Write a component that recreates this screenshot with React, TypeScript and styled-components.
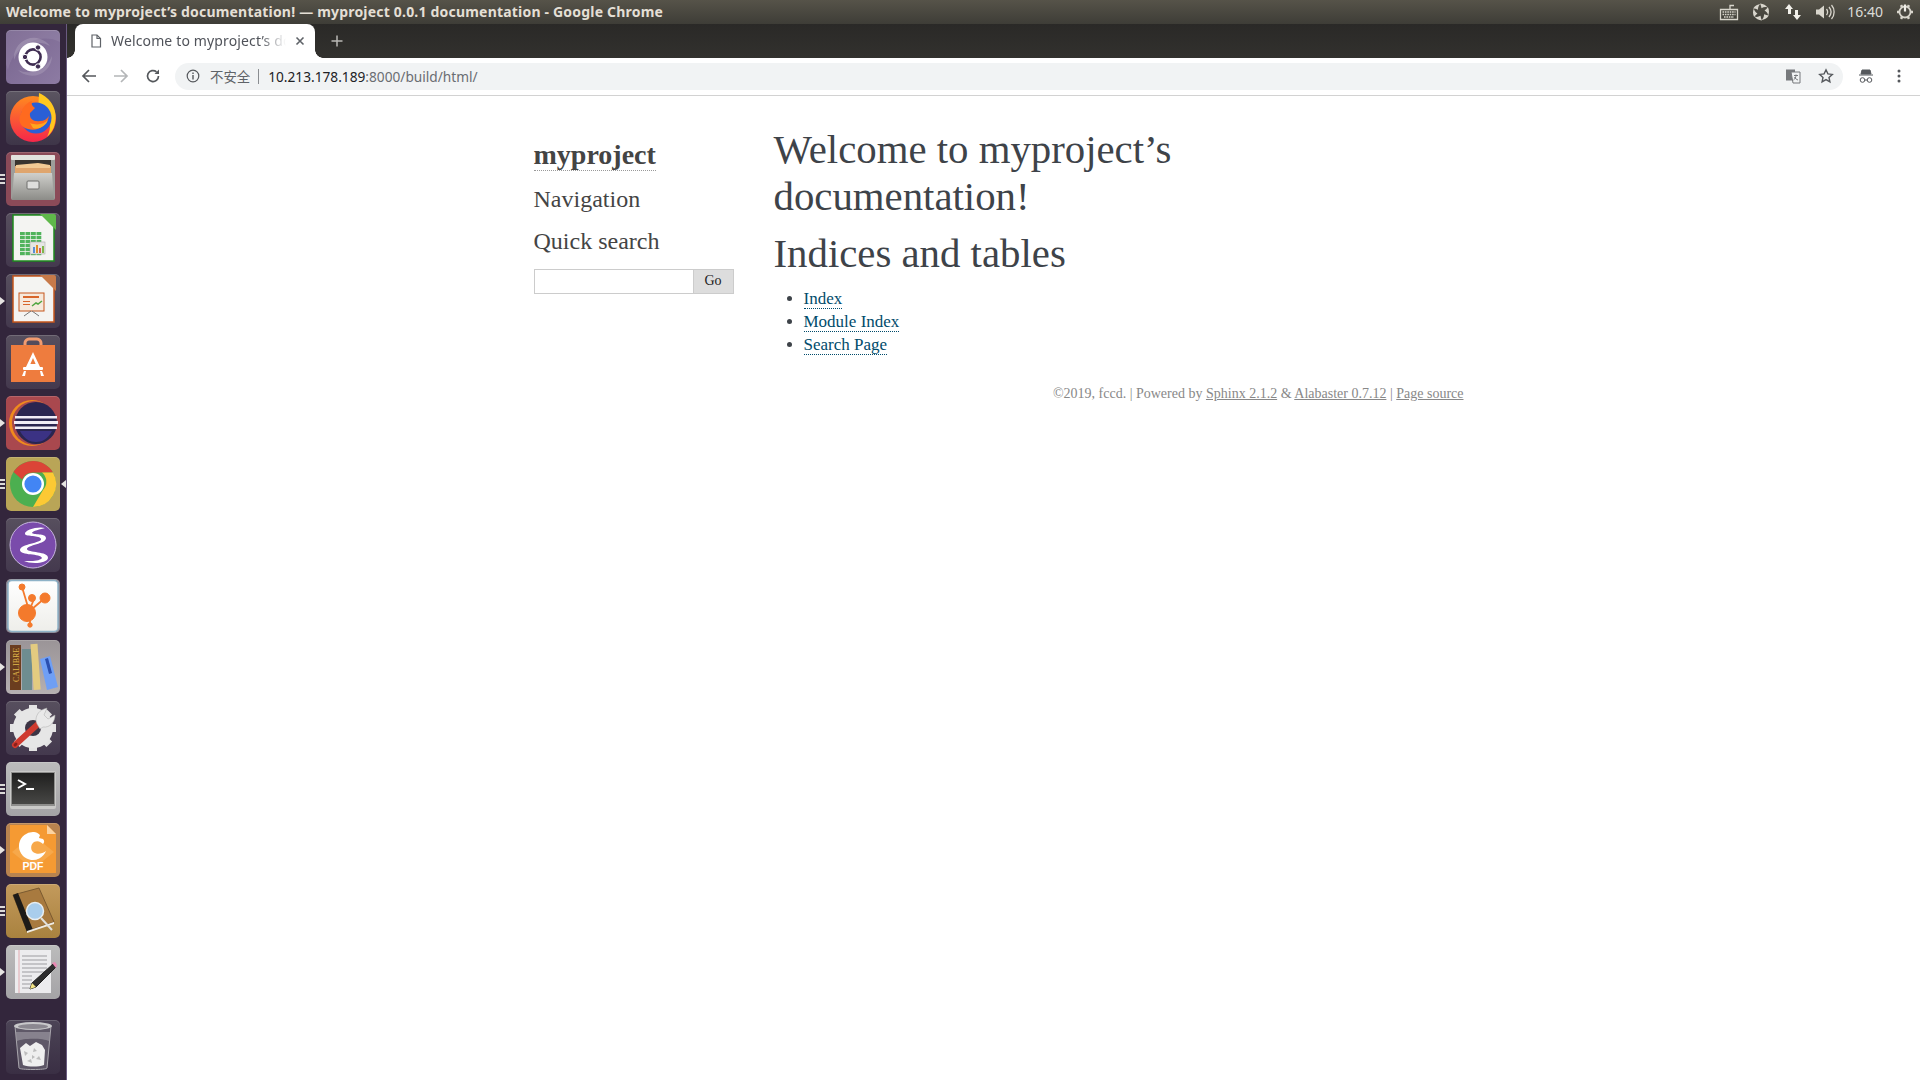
import React from "react";
import styled, { createGlobalStyle } from "styled-components";

const Global = createGlobalStyle`
  html, body { margin: 0; padding: 0; height: 100%; overflow: hidden; background: #fff; }
  #root { height: 100%; }
`;

const Screen = styled.div`
  display: flex; flex-direction: column; height: 1080px; width: 1920px; overflow: hidden;
`;
const TopBar = styled.header`
  height: 24px; flex: none; display: flex; align-items: center; justify-content: space-between;
  padding: 0 6px 0 6px;
  background: linear-gradient(#565349, #3e3d37);
  color: #e4dfd5;
`;
const WindowTitle = styled.div`
  font: 700 14px/24px "Noto Sans", sans-serif; letter-spacing: 0.014em; white-space: nowrap;
`;
const Tray = styled.div`
  display: flex; align-items: center; gap: 12px; color: #d8d5cc;
`;
const Clock = styled.span`
  font: 400 14px/24px "Noto Sans", sans-serif; color: #dcdcd8; margin: 0 1px 0 0;
`;
const Body = styled.div`
  flex: 1; display: flex; min-height: 0;
`;
const Launcher = styled.nav`
  position: relative; width: 67px; flex: none; box-sizing: border-box;
  display: flex; flex-direction: column; gap: 7px; padding: 6px 0 6px 6px;
  background: #33263c; border-right: 1px solid #6a5b80;
`;
const Tile = styled.div<{ $bg: string; $end?: boolean }>`
  position: relative; width: 54px; height: 54px; flex: none; border-radius: 5px;
  background: ${(p) => p.$bg};
  box-shadow: inset 0 1px 0 rgba(255,255,255,.16);
  margin-top: ${(p) => (p.$end ? "auto" : "0")};
  svg { position: absolute; inset: 0; display: block; }
`;
const Pips = styled.i`
  position: absolute; left: -6px; top: 50%; transform: translateY(-50%);
  width: 5px; display: flex; flex-direction: column; gap: 2px;
  span { display: block; height: 2px; background: #dcdad8; }
`;
const ArrowPip = styled.i`
  position: absolute; left: -6px; top: 50%; transform: translateY(-50%);
  border-left: 5px solid #e6e4e2; border-top: 4px solid transparent; border-bottom: 4px solid transparent;
`;
const ActivePip = styled.i`
  position: absolute; right: -6px; top: 50%; transform: translateY(-50%);
  border-right: 5px solid #e6e4e2; border-top: 4px solid transparent; border-bottom: 4px solid transparent;
`;
const Browser = styled.main`
  flex: 1; min-width: 0; display: flex; flex-direction: column;
`;
const TabStrip = styled.div`
  height: 34px; flex: none; display: flex; align-items: stretch;
  padding-left: 8px; background: linear-gradient(#2a2927, #32312e);
  box-sizing: border-box;
`;
const Tab = styled.div`
  position: relative; width: 240px; box-sizing: border-box; display: flex; align-items: center;
  padding: 0 9px 0 14px; gap: 8px; background: #fff; border-radius: 8px 8px 0 0;
  &::before, &::after {
    content: ""; position: absolute; bottom: 0; width: 8px; height: 8px;
  }
  &::before { left: -8px; background: radial-gradient(circle at 0 0, transparent 7.500px, #fff 8px); }
  &::after { right: -8px; background: radial-gradient(circle at 100% 0, transparent 7.500px, #fff 8px); }
`;
const TabTitle = styled.span`
  flex: 1; min-width: 0; overflow: hidden; white-space: nowrap;
  font: 400 14px/34px "Noto Sans", sans-serif; color: #50535a; letter-spacing: .01em;
  mask-image: linear-gradient(90deg, #000 85%, transparent 100%);
`;
const NewTab = styled.div`
  width: 44px; display: flex; align-items: center; justify-content: center; color: #b9b8b5;
`;
const Toolbar = styled.div`
  height: 38px; flex: none; box-sizing: border-box; display: flex; align-items: center;
  background: #fff; border-bottom: 1px solid #d2d2d2; padding: 0 0 1px 6px;
`;
const NavButton = styled.button`
  width: 32px; height: 28px; padding: 0; margin: 0; border: 0; background: none;
  display: flex; align-items: center; justify-content: center;
`;
const Omnibox = styled.div`
  flex: 1; height: 27px; margin-left: 6px; border-radius: 14px; background: #f1f3f4;
  display: flex; align-items: center; padding: 0 9px 0 11px; min-width: 0;
`;
const Insecure = styled.span`
  font: 400 13.400px/27px "Noto Sans CJK SC", sans-serif; color: #5f6368; margin-left: 10px;
`;
const Divider = styled.span`
  width: 1px; height: 15px; background: #8a8d91; margin: 0 9px 0 8px;
`;
const Url = styled.span`
  flex: 1; font: 400 13.700px/27px "Noto Sans", sans-serif; color: #6a6d72;
  b { font-weight: 400; color: #202124; }
`;
const OmniIcon = styled.span<{ $gap: number }>`
  display: flex; width: 16px; height: 16px; position: relative; margin-left: ${(p) => p.$gap}px;
`;
const ToolIcons = styled.div`
  width: 77px; flex: none; display: flex; align-items: center; justify-content: space-between;
  padding: 0 19px 0 15px; box-sizing: border-box;
`;
const Page = styled.div`
  flex: 1; background: #fff; color: #3e4349; font: 17px/23px "Liberation Serif", serif;
  padding-top: 30px; overflow: hidden;
`;
const Doc = styled.div`
  width: 940px; margin: 0 auto; display: flex;
`;
const Sidebar = styled.aside`
  width: 220px; flex: none; box-sizing: border-box; padding: 11px 10px 0;
`;
const Logo = styled.h1`
  margin: 0 0 8px; font: 700 28px/36px "Liberation Serif", serif; color: #444;
  span { border-bottom: 1px dotted #999; }
`;
const SideHead = styled.h3`
  margin: 0 0 5.500px; font: 400 24px/36px "Liberation Serif", serif; color: #444;
`;
const SearchForm = styled.form`
  display: flex; height: 25px; margin-top: 10px; width: 200px;
`;
const SearchInput = styled.input`
  flex: 1; min-width: 0; box-sizing: border-box; border: 1px solid #ccc; border-right: 0; background: #fff; padding: 0; margin: 0;
`;
const SearchButton = styled.button`
  width: 41px; box-sizing: border-box; border: 1px solid #ccc; background: #ddd; padding: 0; margin: 0;
  font: 14px "Liberation Serif", serif; color: #222;
`;
const Content = styled.article`
  flex: 1; padding: 0 30px;
`;
const H1 = styled.h1`
  margin: 0 0 11px; font: 400 40.8px/47px "Liberation Serif", serif; color: #3e4349;
`;
const H2 = styled.h2`
  margin: 0 0 10px; font: 400 40.8px/46px "Liberation Serif", serif; color: #3e4349;
`;
const List = styled.ul`
  margin: 0 0 0 30px; padding: 0;
`;
const DocLink = styled.a`
  color: #004b6b; text-decoration: none; border-bottom: 1px dotted #004b6b;
`;
const Footer = styled.footer`
  width: 940px; margin: 28px auto 0; text-align: right; font: 14px/20px "Liberation Serif", serif; color: #888;
  a { color: #888; text-decoration: underline; }
`;

const I = ({ s = 54, children, ...r }: any) => (
  <svg width={s} height={s} viewBox={`0 0 ${s} ${s}`} {...r}>{children}</svg>
);

const UbuntuIcon = () => (
  <I>
    <path d="M2 40C8 14 34 2 54 12V4a4 4 0 0 0-4-4H4a4 4 0 0 0-4 4v30z" fill="#fff" opacity=".08" />
    <path d="M8 30A20 20 0 0 1 44 16 25 25 0 0 0 8 30z" fill="#fff" opacity=".16" />
    <path d="M46 26A20 20 0 0 1 12 40 25 25 0 0 0 46 26z" fill="#fff" opacity=".14" />
    <circle cx="27" cy="27" r="14.500" fill="#fff" />
    <circle cx="27" cy="27" r="7.600" fill="none" stroke="#3f2d52" strokeWidth="2.600" />
    <circle cx="32" cy="17.500" r="2.700" fill="#3f2d52" stroke="#fff" />
    <circle cx="19" cy="27" r="2.700" fill="#3f2d52" stroke="#fff" />
    <circle cx="32" cy="36.500" r="2.700" fill="#3f2d52" stroke="#fff" />
  </I>
);
const FirefoxIcon = () => (
  <I>
    <defs>
      <linearGradient id="ffo" x1="0" y1="0" x2="0" y2="1">
        <stop offset="0" stopColor="#ff8a1f" />
        <stop offset="1" stopColor="#f5264a" />
      </linearGradient>
    </defs>
    <circle cx="27" cy="28" r="23" fill="url(#ffo)" />
    <path d="M33 2c12 5 19 17 16 30-1 6-4 10-8 14 6-11 3-22-9-25z" fill="#ffc81f" />
    <circle cx="30" cy="27" r="15.500" fill="#2a5fd6" />
    <path d="M15 22c2-7 7-11 11-12-1 3 0 5 3 7l-5 5c-1 6 4 9 10 8 4 0 7-2 9-5-2 10-12 16-21 13C13 36 12 28 15 22z" fill="#ff6a1f" />
    <path d="M24 32c7 3 14 1 18-3-2 6-9 10-15 8z" fill="#ffa51f" />
  </I>
);
const FilesIcon = () => (
  <I>
    <defs>
      <linearGradient id="fc" x1="0" y1="0" x2="0" y2="1">
        <stop offset="0" stopColor="#cfcfcb" />
        <stop offset="1" stopColor="#8c8c88" />
      </linearGradient>
    </defs>
    <rect x="5" y="3" width="44" height="45" rx="2" fill="#9d9d9a" />
    <rect x="5" y="3" width="44" height="5" rx="1" fill="#e2e2de" />
    <rect x="9" y="8" width="36" height="14" fill="#38342f" />
    <path d="M9 14h36v9H9z" fill="#dfa56d" />
    <path d="M10 13l22-2 12 2v3H10z" fill="#f2ca94" />
    <path d="M8 21h38l2 27H6z" fill="url(#fc)" />
    <rect x="21" y="29" width="12" height="8" rx="1" fill="#dededc" stroke="#6f6f6c" />
  </I>
);
const CalcIcon = () => (
  <I>
    <path d="M7 2h33l8 8v38H7z" fill="#f4f4f2" stroke="#1e8a1e" strokeWidth="1.500" />
    <path d="M34 1h14a2 2 0 0 1 2 2v14z" fill="#5fb84a" />
    <g fill="#50b35c">
      {[0, 1, 2, 3, 4, 5].map((r) =>
        [0, 1, 2, 3].map((c) => <rect key={`${r}${c}`} x={14 + c * 5.500} y={19 + r * 4} width="4.800" height="3.200" />)
      )}
    </g>
    <rect x="24" y="29" width="15" height="12" fill="#e6e6e4" stroke="#aaa" strokeWidth=".6" />
    <path d="M27 40v-6h2v6z" fill="#5b8ed6" />
    <path d="M30 40v-8h2v8z" fill="#e2902a" />
    <path d="M33 40v-5h2v5z" fill="#d65b5b" />
    <path d="M36 40v-7h2v7z" fill="#7fb74a" />
  </I>
);
const ImpressIcon = () => (
  <I>
    <path d="M7 2h33l8 8v38H7z" fill="#f4f4f2" stroke="#c5561c" strokeWidth="1.500" />
    <path d="M34 1h14a2 2 0 0 1 2 2v14z" fill="#c77a4a" />
    <rect x="13" y="19" width="25" height="18" fill="#f6e9dc" stroke="#c5561c" />
    <path d="M17 22h16v2H17zM17 27h7v1H17zM17 30h7v1H17z" fill="#d8662b" />
    <path d="M26 32l4-3 2 1 4-3" stroke="#52a642" strokeWidth="1.500" fill="none" />
    <path d="M25 37l-7 5M26 37l7 5" stroke="#777" />
  </I>
);
const SoftwareIcon = () => (
  <I>
    <path d="M19 13V8c0-2 2-4 4-4h8c2 0 4 2 4 4v5" fill="none" stroke="#f19b70" strokeWidth="3" />
    <path d="M5 10h44v37H5z" fill="#ee7c3e" />
    <path d="M27 17l7 15H20z" fill="#fff" />
    <path d="M27 23l2.600 6h-5.200z" fill="#ee7c3e" />
    <rect x="17" y="32" width="20" height="3" rx="1" fill="#fff" />
    <path d="M20 36h-2l-2 5h3zM34 36h2l2 5h-3z" fill="#fff" />
  </I>
);
const EclipseIcon = () => (
  <I>
    <circle cx="26" cy="27" r="23" fill="#f08a1d" />
    <circle cx="28" cy="27" r="22" fill="#a6484e" />
    <circle cx="30" cy="27" r="21" fill="#2a2550" />
    <path d="M9 20h42v2.500H9zM8 25h44v3H8zM9 30.500h42V33H9z" fill="#f0ecf6" />
    <path d="M14 35h32c-4 8-10 11-16 11s-12-3-16-11z" fill="#3b3284" />
  </I>
);
const ChromeIcon = () => (
  <I>
    <circle cx="27" cy="27" r="23" fill="#4caf50" />
    <path d="M7.500 15A23 23 0 0 1 47 15.500H27a12 12 0 0 0-11 7z" fill="#db4437" />
    <path d="M47 15.500A23 23 0 0 1 27 50l10-17a12 12 0 0 0-1-17.500z" fill="#fcc934" />
    <circle cx="27" cy="27" r="11" fill="#fff" />
    <circle cx="27" cy="27" r="8.600" fill="#4285f4" />
  </I>
);
const EmacsIcon = () => (
  <I>
    <circle cx="27" cy="27" r="23" fill="#7a4bab" stroke="#c7b4df" strokeWidth="1" />
    <path d="M39 10c-7-2-21 2-20 6 1 3 15 1 16 5 1 4-21 5-21 11 0 6 21 3 22 8-3 4-15 3-18 3 6 3 23 3 24-3 1-7-21-5-21-9 0-4 19-5 19-11 0-5-13-3-14-5 0-2 9-4 13-5z" fill="#fff" />
  </I>
);
const XmindIcon = () => (
  <I>
    <defs>
      <linearGradient id="xm" x1="0" y1="0" x2="0" y2="1">
        <stop offset="0" stopColor="#fff" />
        <stop offset="1" stopColor="#eeeeea" />
      </linearGradient>
    </defs>
    <rect x="2" y="1.500" width="50" height="51" rx="4" fill="url(#xm)" stroke="#8fb3c8" strokeWidth="1.500" />
    <g fill="#f47a2c" stroke="#f47a2c">
      <path d="M16 8l6 20M24 30l4-10M26 30L39 19M24 40v6" strokeWidth="1.800" fill="none" />
      <circle cx="16" cy="8" r="3" />
      <circle cx="26" cy="19" r="3.500" />
      <circle cx="39" cy="19" r="5" />
      <circle cx="21" cy="34" r="8.500" />
      <circle cx="24" cy="46" r="2.200" />
    </g>
  </I>
);
const CalibreIcon = () => (
  <I>
    <rect x="4" y="5" width="11" height="45" fill="#6b3d1f" />
    <text transform="translate(12.500 42) rotate(-90)" fontFamily="Liberation Serif, serif" fontSize="8" fill="#e0b84a">CALIBRE</text>
    <rect x="16" y="9" width="10" height="41" fill="#6e8d90" />
    <rect x="26" y="4" width="7" height="46" fill="#e3cb80" transform="rotate(-4 28 26)" />
    <path d="M34 19l10-3 8 31-11 3z" fill="#6f9ff5" />
    <path d="M39 19l3-1 4 15-3 1z" fill="#2a4fb0" />
  </I>
);
const SettingsIcon = () => (
  <I>
    <g stroke="#e3e3e3" strokeWidth="8">
      {[0, 45, 90, 135].map((a) => <path key={a} d="M27 4v46" transform={`rotate(${a} 27 27)`} />)}
    </g>
    <circle cx="27" cy="27" r="14" fill="none" stroke="#e6e6e6" strokeWidth="12" />
    <circle cx="27" cy="27" r="8" fill="#3c3444" />
    <path d="M9 44l23-21" stroke="#cf3a2f" strokeWidth="6" strokeLinecap="round" />
    <path d="M9 44l1-1" stroke="#8a1f1a" strokeWidth="3" strokeLinecap="round" />
    <path d="M31 23c-3-6 1-13 7-15l3-1-3 7 4 4 7-4c0 7-5 13-12 12l-3 2z" fill="#e9e9e9" stroke="#aaa" strokeWidth=".5" />
  </I>
);
const TerminalIcon = () => (
  <I>
    <defs>
      <linearGradient id="tm" x1="0" y1="0" x2="0" y2="1">
        <stop offset="0" stopColor="#1f1f1e" />
        <stop offset="1" stopColor="#474745" />
      </linearGradient>
    </defs>
    <rect x="4" y="9" width="46" height="38" rx="2" fill="#c9c9c7" />
    <rect x="5" y="10" width="44" height="34" fill="#8e8e8c" />
    <rect x="6" y="11" width="42" height="31" fill="url(#tm)" />
    <path d="M12 18l7 4-7 4" fill="none" stroke="#fff" strokeWidth="2" />
    <path d="M20 27h8" stroke="#fff" strokeWidth="2" />
  </I>
);
const FoxitIcon = () => (
  <I>
    <path d="M4 2h37l9 9v39H4z" fill="#f59a33" />
    <path d="M27 12l21 17-21 17L6 29z" fill="#f7a84a" />
    <path d="M41 2l9 9h-9z" fill="#fbd3a2" />
    <path d="M28 9a14 14 0 1 0 12 19c-4 3-9 4-13 1-3-3-2-8 1-10 4-2 7 0 9 2 2-2 1-4 0-5l-4-1 1-3c-2-2-4-3-6-3z" fill="#fff" />
    <text x="27" y="47" textAnchor="middle" fontFamily="Liberation Sans, sans-serif" fontWeight="700" fontSize="10.500" fill="#fff">PDF</text>
  </I>
);
const BookIcon = () => (
  <I>
    <path d="M7 11L33 4l15 34-27 9z" fill="#a87a3f" stroke="#7a5a30" />
    <path d="M7 11L12 9l15 37-6 2z" fill="#1d1b18" />
    <path d="M21 47l27-9v2l-27 9z" fill="#f0ece4" />
    <circle cx="29" cy="27" r="8.500" fill="#a9cdec" stroke="#e8eef2" strokeWidth="1.500" />
    <path d="M35 34l11 12" stroke="#e0e0dc" strokeWidth="2" />
  </I>
);
const GeditIcon = () => (
  <I>
    <rect x="9" y="5" width="36" height="43" fill="#ececee" />
    <path d="M13 5v43" stroke="#e2aab0" />
    <g stroke="#9c9ca0" strokeWidth="1">
      {[11, 15, 19, 23, 27, 31, 35, 39, 43].map((y) => <path key={y} d={`M16 ${y}h${y > 27 ? 10 : 25}`} />)}
    </g>
    <path d="M47 19l3 3-20 20-6 2 2-6z" fill="#2d2d2e" stroke="#222" />
    <path d="M46 18l3-1 2 3-1 3z" fill="#e889b3" />
    <path d="M24 44l2-6 4 4z" fill="#f2e484" />
  </I>
);
const TrashIcon = () => (
  <I>
    <path d="M9 6l4 42c0 2 28 2 28 0l4-42z" fill="#6a6472" fillOpacity=".7" stroke="#a9a6ad" />
    <ellipse cx="27" cy="6" rx="19" ry="4" fill="#c8c8ca" />
    <ellipse cx="27" cy="6.500" rx="15" ry="2.500" fill="#8b8890" />
    <path d="M10 12h34l-1 9c-6-3-26-3-32 0z" fill="#fff" opacity=".25" />
    <g fill="#efefef">
      <path d="M14 28l6-5 4 3 6-4 6 3 3 5-1 15c-6 2-15 2-21 0z" />
    </g>
    <g fill="#bdbdbd">
      <path d="M18 31l4 2-3 3zM28 28l3 3-4 1zM33 36l2 4-5-1zM21 41l4-2 1 4zM26 35l3 2-3 2z" />
    </g>
  </I>
);

const dock: { Icon: React.FC; bg: string; mark?: "two" | "arrow" | "active" }[] = [
  { Icon: UbuntuIcon, bg: "linear-gradient(135deg,#77648e,#8d7ba3)" },
  { Icon: FirefoxIcon, bg: "linear-gradient(#5b5561,#3e3548)" },
  { Icon: FilesIcon, bg: "#8b4a58", mark: "two" },
  { Icon: CalcIcon, bg: "linear-gradient(#574f5e,#44394e)" },
  { Icon: ImpressIcon, bg: "linear-gradient(#574f5e,#44394e)", mark: "arrow" },
  { Icon: SoftwareIcon, bg: "linear-gradient(#574f5e,#44394e)" },
  { Icon: EclipseIcon, bg: "#a9484e", mark: "arrow" },
  { Icon: ChromeIcon, bg: "#b9a557", mark: "active" },
  { Icon: EmacsIcon, bg: "linear-gradient(#574f5e,#44394e)" },
  { Icon: XmindIcon, bg: "#8a8590" },
  { Icon: CalibreIcon, bg: "linear-gradient(#9a9497,#b5afb1)", mark: "arrow" },
  { Icon: SettingsIcon, bg: "linear-gradient(#574f5e,#44394e)" },
  { Icon: TerminalIcon, bg: "linear-gradient(#bcbcbc,#a4a3a6)", mark: "two" },
  { Icon: FoxitIcon, bg: "#b8834f", mark: "arrow" },
  { Icon: BookIcon, bg: "linear-gradient(#c39a5c,#a9823f)", mark: "two" },
  { Icon: GeditIcon, bg: "linear-gradient(#bcbcbc,#a4a3a6)", mark: "arrow" },
];

const Tick = ({ mark }: { mark?: string }) => {
  if (mark === "two") return <Pips><span /><span /><span /></Pips>;
  if (mark === "arrow") return <ArrowPip />;
  if (mark === "active") return <><Pips><span /><span /><span /></Pips><ActivePip /></>;
  return null;
};

const TraySvg = ({ w, children }: any) => (
  <svg width={w} height="20" viewBox={`0 0 ${w} 20`} fill="none" stroke="currentColor" strokeWidth="1.300">{children}</svg>
);

export default function App() {
  return (
    <Screen>
      <Global />
      <TopBar>
        <WindowTitle>Welcome to myproject’s documentation! — myproject 0.0.1 documentation - Google Chrome</WindowTitle>
        <Tray>
          <TraySvg w={20}>
            <path d="M1.500 7.500h17v10h-17zM11 7V3.500h4" />
            <path d="M3.500 10h13M3.500 12.500h13M5 15h10" strokeDasharray="1.600 .8" strokeWidth="1.600" />
          </TraySvg>
          <TraySvg w={20}>
            {[0, 60, 120, 180, 240, 300].map((a) => (
              <path key={a} d="M9 1.500C12.500 1.800 15 3.300 16.500 5.500 14.500 4.800 12.500 5 10.500 6.200 10.300 4.500 9.800 3 9 1.500z" fill="currentColor" stroke="none" transform={`rotate(${a} 10 10)`} />
            ))}
          </TraySvg>
          <TraySvg w={20}>
            <path d="M6 2l4 5H8v5H5V7H2zM14 18l4-5h-3V8h-3v5h-2z" fill="#f2f0ea" stroke="none" />
          </TraySvg>
          <TraySvg w={20}>
            <path d="M1 7.500h3l5-4v13l-5-4H1z" fill="currentColor" stroke="none" />
            <path d="M11.500 7c1.500 2 1.500 4 0 6M14 5c2.500 3 2.500 7 0 10M16.500 3c3.500 4 3.500 10 0 14" />
          </TraySvg>
          <Clock>16:40</Clock>
          <TraySvg w={18}>
            <g stroke="currentColor" strokeWidth="2.500">
              {[0, 60, 120].map((a) => <path key={a} d="M9 2v16" transform={`rotate(${a + 30} 9 10)`} />)}
            </g>
            <circle cx="9" cy="10" r="5.500" fill="#4a4841" stroke="currentColor" strokeWidth="1.800" />
            <path d="M9 2.500v7" strokeWidth="2.200" stroke="#f0eee8" />
          </TraySvg>
        </Tray>
      </TopBar>
      <Body>
        <Launcher>
          {dock.map(({ Icon, bg, mark }, i) => (
            <Tile key={i} $bg={bg}>
              <Icon />
              <Tick mark={mark} />
            </Tile>
          ))}
          <Tile $bg="linear-gradient(#4c4456,#3a2f44)" $end>
            <TrashIcon />
          </Tile>
        </Launcher>
        <Browser>
          <TabStrip>
            <Tab>
              <svg width="14" height="16" viewBox="0 0 14 16" fill="none" stroke="#5f6368" strokeWidth="1.200">
                <path d="M3 2h5l3.500 3.500V14H3z" />
                <path d="M8 2v3.500h3.500" />
              </svg>
              <TabTitle>Welcome to myproject’s documentation!</TabTitle>
              <svg width="12" height="12" viewBox="0 0 12 12" stroke="#5f6368" strokeWidth="1.600">
                <path d="M2.500 2.500l7 7M9.500 2.500l-7 7" />
              </svg>
            </Tab>
            <NewTab>
              <svg width="14" height="14" viewBox="0 0 14 14" stroke="currentColor" strokeWidth="1.500">
                <path d="M7 1.500v11M1.500 7h11" />
              </svg>
            </NewTab>
          </TabStrip>
          <Toolbar>
            <NavButton aria-label="Back">
              <svg width="16" height="16" viewBox="0 0 16 16" fill="none" stroke="#55585c" strokeWidth="1.700">
                <path d="M15 8H2M8 2L2 8l6 6" />
              </svg>
            </NavButton>
            <NavButton aria-label="Forward">
              <svg width="16" height="16" viewBox="0 0 16 16" fill="none" stroke="#b4b6b8" strokeWidth="1.700">
                <path d="M1 8h13M8 2l6 6-6 6" />
              </svg>
            </NavButton>
            <NavButton aria-label="Reload">
              <svg width="16" height="16" viewBox="0 0 16 16" fill="none" stroke="#55585c" strokeWidth="1.700">
                <path d="M13.500 8A5.500 5.500 0 1 1 11.500 3.800" />
                <path d="M14 1.500V6H9.500z" fill="#55585c" stroke="none" />
              </svg>
            </NavButton>
            <Omnibox>
              <svg width="14" height="14" viewBox="0 0 14 14" fill="none" stroke="#55585c" strokeWidth="1.200">
                <circle cx="7" cy="7" r="5.800" />
                <path d="M7 6v4.500M7 3.500v1.500" strokeWidth="1.400" />
              </svg>
              <Insecure>不安全</Insecure>
              <Divider />
              <Url><b>10.213.178.189</b>:8000/build/html/</Url>
              <OmniIcon $gap={0}>
                <svg width="16" height="16" viewBox="0 0 16 16">
                  <rect x="1" y="1.500" width="9" height="11" fill="#77797c" />
                  <path d="M6 4h9v11H8z" fill="#f1f3f4" stroke="#77797c" />
                  <path d="M9 7.500h4M11 6.500c0 3-1 4.500-2.500 5.500M9.500 9c.7 1.500 2 2.500 3.500 3" fill="none" stroke="#77797c" />
                </svg>
              </OmniIcon>
              <OmniIcon $gap={17}>
                <svg width="16" height="16" viewBox="0 0 16 16" fill="none" stroke="#55585c" strokeWidth="1.400">
                  <path d="M8 1.800l1.900 4.100 4.400.5-3.300 3 .9 4.400L8 11.600l-3.900 2.200.9-4.400-3.300-3 4.400-.5z" />
                </svg>
              </OmniIcon>
            </Omnibox>
            <ToolIcons>
              <svg width="16" height="16" viewBox="0 0 16 16" fill="none" stroke="#55585c">
                <path d="M4 2h8l1 4H3zM1 7h14" fill="#55585c" />
                <circle cx="4.500" cy="12" r="2.300" />
                <circle cx="11.500" cy="12" r="2.300" />
                <path d="M6.800 12h2.400" />
              </svg>
              <svg width="4" height="14" viewBox="0 0 4 14" fill="#55585c">
                <circle cx="2" cy="2" r="1.500" /><circle cx="2" cy="7" r="1.500" /><circle cx="2" cy="12" r="1.500" />
              </svg>
            </ToolIcons>
          </Toolbar>
          <Page>
            <Doc>
              <Sidebar>
                <Logo><span>myproject</span></Logo>
                <SideHead>Navigation</SideHead>
                <SideHead>Quick search</SideHead>
                <SearchForm onSubmit={(e) => e.preventDefault()}>
                  <SearchInput />
                  <SearchButton type="submit">Go</SearchButton>
                </SearchForm>
              </Sidebar>
              <Content>
                <H1>Welcome to myproject’s documentation!</H1>
                <H2>Indices and tables</H2>
                <List>
                  <li><DocLink href="#">Index</DocLink></li>
                  <li><DocLink href="#">Module Index</DocLink></li>
                  <li><DocLink href="#">Search Page</DocLink></li>
                </List>
              </Content>
            </Doc>
            <Footer>
              ©2019, fccd. | Powered by <a href="#">Sphinx 2.1.2</a> &amp; <a href="#">Alabaster 0.7.12</a> | <a href="#">Page source</a>
            </Footer>
          </Page>
        </Browser>
      </Body>
    </Screen>
  );
}
